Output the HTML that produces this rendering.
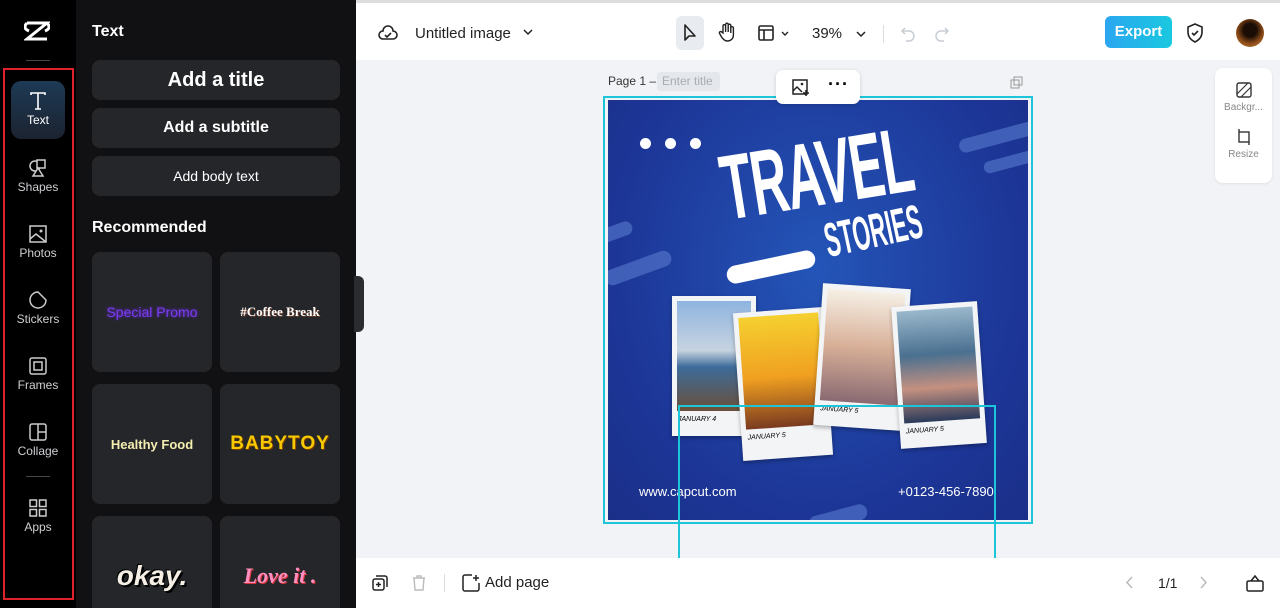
<!DOCTYPE html>
<html><head><meta charset="utf-8"><style>
*{box-sizing:border-box;margin:0;padding:0}
body{width:1280px;height:608px;overflow:hidden;font-family:"Liberation Sans",sans-serif;position:relative;background:#f1f3f6}
.abs{position:absolute}
#nav{left:0;top:0;width:76px;height:608px;background:#000}
#panel{left:76px;top:0;width:280px;height:608px;background:#111113}
.nv{position:absolute;left:11px;width:54px;height:58px;color:#cfcfd3;font-size:12px;text-align:center}
.nv svg{display:block;margin:10px auto 2px}
.btn{position:absolute;left:16px;width:248px;background:#25262a;border-radius:8px;color:#fff;text-align:center;font-weight:bold}
.tile{position:absolute;width:120px;height:120px;background:#25262a;border-radius:8px;display:flex;align-items:center;justify-content:center;font-weight:bold}
#top{left:356px;top:0;width:924px;height:60px;background:#fff;border-top:3px solid #ddd}
#bot{left:356px;top:558px;width:924px;height:50px;background:#fff}
</style></head><body>
<div id="nav" class="abs">
 <svg class="abs" style="left:24px;top:20px" width="26" height="22" viewBox="0 0 26 22"><path d="M3 3 L23 3 L3 19 L23 19 M3 3 C0 6 0 9 5 11 M23 3 C26 6 26 9 21 11" stroke="#fff" stroke-width="3" fill="none"/></svg>
 <div class="abs" style="left:26px;top:60px;width:24px;height:1px;background:#444"></div>
 <div class="abs" style="left:3px;top:68px;width:71px;height:532px;border:2px solid #e0222a"></div>
 <div class="nv" style="top:81px;background:linear-gradient(#1d3a55,#1c2330);border-radius:10px;color:#fff">
  <svg width="20" height="20" viewBox="0 0 20 20"><path d="M3 4V2h14v2M10 2v16M7 18h6" stroke="#fff" stroke-width="1.6" fill="none"/></svg>Text</div>
 <div class="nv" style="top:148px"><svg width="20" height="20" viewBox="0 0 20 20"><circle cx="7" cy="8" r="5" stroke="#ccc" stroke-width="1.5" fill="none"/><rect x="9" y="2" width="8" height="8" stroke="#ccc" stroke-width="1.5" fill="#000"/><path d="M10 10L15 18H5Z" stroke="#ccc" stroke-width="1.5" fill="#000"/></svg>Shapes</div>
 <div class="nv" style="top:214px"><svg width="20" height="20" viewBox="0 0 20 20"><rect x="2" y="2" width="16" height="16" stroke="#ccc" stroke-width="1.5" fill="none"/><path d="M2 15l6-5 10 8" stroke="#ccc" stroke-width="1.5" fill="none"/><circle cx="13" cy="7" r="1.5" fill="#ccc"/></svg>Photos</div>
 <div class="nv" style="top:280px"><svg width="20" height="20" viewBox="0 0 20 20"><path d="M10 2a8 8 0 1 0 8 8l-8-8z" stroke="#ccc" stroke-width="1.5" fill="none"/></svg>Stickers</div>
 <div class="nv" style="top:346px"><svg width="20" height="20" viewBox="0 0 20 20"><rect x="2" y="2" width="16" height="16" rx="2" stroke="#ccc" stroke-width="1.5" fill="none"/><rect x="6" y="6" width="8" height="8" stroke="#ccc" stroke-width="1.5" fill="none"/></svg>Frames</div>
 <div class="nv" style="top:412px"><svg width="20" height="20" viewBox="0 0 20 20"><rect x="2" y="2" width="16" height="16" rx="2" stroke="#ccc" stroke-width="1.5" fill="none"/><path d="M10 2v16M10 10h8" stroke="#ccc" stroke-width="1.5"/></svg>Collage</div>
 <div class="abs" style="left:26px;top:476px;width:24px;height:1px;background:#444"></div>
 <div class="nv" style="top:488px"><svg width="20" height="20" viewBox="0 0 20 20"><rect x="2" y="2" width="6.5" height="6.5" stroke="#ccc" stroke-width="1.5" fill="none"/><rect x="11.5" y="2" width="6.5" height="6.5" stroke="#ccc" stroke-width="1.5" fill="none"/><rect x="2" y="11.5" width="6.5" height="6.5" stroke="#ccc" stroke-width="1.5" fill="none"/><rect x="11.5" y="11.5" width="6.5" height="6.5" stroke="#ccc" stroke-width="1.5" fill="none"/></svg>Apps</div>
</div>
<div id="panel" class="abs">
 <div class="abs" style="left:16px;top:23px;color:#fff;font-weight:bold;font-size:16px">Text</div>
 <div class="btn" style="top:60px;height:40px;line-height:40px;font-size:20px">Add a title</div>
 <div class="btn" style="top:108px;height:40px;line-height:40px;font-size:16px">Add a subtitle</div>
 <div class="btn" style="top:156px;height:40px;line-height:40px;font-size:14px;font-weight:normal">Add body text</div>
 <div class="abs" style="left:16px;top:219px;color:#fff;font-weight:bold;font-size:16px">Recommended</div>
 <div class="tile" style="left:16px;top:252px;color:#7b3cf0;font-size:14px;font-weight:normal;text-shadow:0 0 3px #6a2be0">Special Promo</div>
 <div class="tile" style="left:144px;top:252px;color:#fff;font-family:'Liberation Serif',serif;font-size:13px;text-shadow:1px 1px 0 #6b3a25">#Coffee Break</div>
 <div class="tile" style="left:16px;top:384px;color:#f4eeb0;font-size:13px">Healthy Food</div>
 <div class="tile" style="left:144px;top:384px;color:#f6c900;font-size:19px;letter-spacing:1px;text-shadow:1px 1px 0 #7a3b00">BABYTOY</div>
 <div class="tile" style="left:16px;top:516px;height:92px;border-radius:8px 8px 0 0;padding-top:28px;color:#f5efe6;font-size:28px;font-style:italic;text-shadow:2px 2px 0 #000,-1px -1px 0 #000">okay.</div>
 <div class="tile" style="left:144px;top:516px;height:92px;border-radius:8px 8px 0 0;padding-top:28px;color:#ff8fc0;font-family:'Liberation Serif',serif;font-size:22px;font-style:italic;text-shadow:1px 1px 0 #d8343a">Love it .</div>
 <div class="abs" style="left:278px;top:276px;width:10px;height:56px;background:#2b2c30;border-radius:0 6px 6px 0"></div>
</div>
<div id="top" class="abs">
 <svg class="abs" style="left:22px;top:21px" width="20" height="18" viewBox="0 0 20 18"><path d="M5 15a4 4 0 0 1 0-8 5 5 0 0 1 10 0 4 4 0 0 1 0 8z" stroke="#222" stroke-width="1.6" fill="none"/><path d="M7 11l2 2 4-4" stroke="#222" stroke-width="1.6" fill="none"/></svg>
 <div class="abs" style="left:59px;top:22px;font-size:15px;color:#222">Untitled image</div>
 <svg class="abs" style="left:167px;top:26px" width="10" height="7" viewBox="0 0 10 7"><path d="M1 1l4 4 4-4" stroke="#222" stroke-width="1.5" fill="none"/></svg>
 <div class="abs" style="left:320px;top:13px;width:28px;height:34px;background:#e8ebef;border-radius:6px"></div>
 <svg class="abs" style="left:327px;top:21px" width="14" height="18" viewBox="0 0 14 18"><path d="M2 1v15l4-4 6 0z" stroke="#222" stroke-width="1.6" fill="none" stroke-linejoin="round"/></svg>
 <svg class="abs" style="left:362px;top:19px" width="18" height="20" viewBox="0 0 18 20"><path d="M5 11V4a1.3 1.3 0 0 1 2.6 0v6V2.5a1.3 1.3 0 0 1 2.6 0V10V3.5a1.3 1.3 0 0 1 2.6 0V11V6a1.3 1.3 0 0 1 2.6 0v7c0 4-3 6-6 6s-5-2-7-6l-1-2a1.3 1.3 0 0 1 2.3-1z" stroke="#222" stroke-width="1.4" fill="none"/></svg>
 <svg class="abs" style="left:402px;top:22px" width="16" height="16" viewBox="0 0 16 16"><rect x="1" y="1" width="14" height="14" rx="1.5" stroke="#222" stroke-width="1.6" fill="none"/><path d="M1 5h14M6 5v10" stroke="#222" stroke-width="1.6"/></svg>
 <svg class="abs" style="left:425px;top:28px" width="8" height="6" viewBox="0 0 8 6"><path d="M1 1l3 3 3-3" stroke="#222" stroke-width="1.4" fill="none"/></svg>
 <div class="abs" style="left:456px;top:22px;font-size:15px;color:#222">39%</div>
 <svg class="abs" style="left:500px;top:28px" width="10" height="7" viewBox="0 0 10 7"><path d="M1 1l4 4 4-4" stroke="#222" stroke-width="1.5" fill="none"/></svg>
 <div class="abs" style="left:527px;top:22px;width:1px;height:18px;background:#ddd"></div>
 <svg class="abs" style="left:544px;top:23px" width="16" height="16" viewBox="0 0 16 16"><path d="M5 2L2 5l3 3M2 5h7a5 5 0 0 1 0 10H6" stroke="#c8cdd3" stroke-width="1.5" fill="none"/></svg>
 <svg class="abs" style="left:578px;top:23px" width="16" height="16" viewBox="0 0 16 16"><path d="M11 2l3 3-3 3M14 5H7a5 5 0 0 0 0 10h3" stroke="#c8cdd3" stroke-width="1.5" fill="none"/></svg>
 <div class="abs" style="left:749px;top:13px;width:67px;height:32px;border-radius:6px;background:linear-gradient(90deg,#2aa6f0,#1ac8e0);color:#fff;font-weight:bold;font-size:15px;text-align:center;line-height:32px">Export</div>
 <svg class="abs" style="left:830px;top:20px" width="18" height="20" viewBox="0 0 18 20"><path d="M9 1l7 3v5c0 5-3 8-7 10-4-2-7-5-7-10V4z" stroke="#222" stroke-width="1.6" fill="none"/><path d="M6 10l2 2 4-4" stroke="#222" stroke-width="1.6" fill="none"/></svg>
 <div class="abs" style="left:880px;top:16px;width:28px;height:28px;border-radius:50%;background:radial-gradient(circle at 50% 40%,#1a0d05 30%,#8a4a18 60%,#d08a3a)"></div>
</div>
<div class="abs" style="left:608px;top:74px;font-size:12px;color:#333">Page 1 –</div>
<div class="abs" style="left:657px;top:72px;width:63px;height:19px;background:#e4e7eb;border-radius:3px;font-size:12px;color:#a8adb4;line-height:19px;padding-left:5px">Enter title</div>
<svg class="abs" style="left:1010px;top:76px" width="13" height="13" viewBox="0 0 13 13"><rect x="1" y="4" width="8" height="8" stroke="#999" fill="none"/><rect x="4" y="1" width="8" height="8" stroke="#999" fill="none"/></svg>
<div class="abs" style="left:603px;top:96px;width:430px;height:428px;border:2px solid #1cc6d8"></div>
<div class="abs" style="left:608px;top:100px;width:420px;height:420px;background:radial-gradient(ellipse at 50% 40%,#2455b8,#1c3596 70%,#1a2f88);overflow:hidden">
 <div class="abs" style="left:350px;top:30px;width:80px;height:14px;background:#4a6ac0;border-radius:8px;transform:rotate(-15deg);opacity:.8"></div>
 <div class="abs" style="left:375px;top:55px;width:60px;height:12px;background:#4a6ac0;border-radius:8px;transform:rotate(-15deg);opacity:.8"></div>
 <div class="abs" style="left:-10px;top:125px;width:35px;height:14px;background:#4a6ac0;border-radius:8px;transform:rotate(-20deg);opacity:.8"></div>
 <div class="abs" style="left:-5px;top:160px;width:70px;height:16px;background:#4a6ac0;border-radius:8px;transform:rotate(-20deg);opacity:.8"></div>
 <div class="abs" style="left:200px;top:410px;width:60px;height:16px;background:#4a6ac0;border-radius:8px;transform:rotate(-15deg);opacity:.8"></div>
 <div class="abs" style="left:32px;top:38px;width:11px;height:11px;border-radius:50%;background:#fff;box-shadow:25px 0 0 #fff,50px 0 0 #fff"></div>
 <div class="abs" style="left:106px;top:40px;color:#fff;font-size:92px;line-height:100px;font-weight:bold;transform:rotate(-9deg) scaleX(.55);transform-origin:left top;letter-spacing:-2px">TRAVEL</div>
 <div class="abs" style="left:212px;top:118px;color:#fff;font-size:48px;line-height:50px;font-weight:bold;transform:rotate(-12deg) scaleX(.47);transform-origin:left top">STORIES</div>
 <div class="abs" style="left:118px;top:158px;width:90px;height:18px;background:#fff;border-radius:10px;transform:rotate(-12deg)"></div>
 <div class="abs" style="left:64px;top:196px;width:84px;height:140px;background:#f2f4f6;box-shadow:0 2px 4px rgba(0,0,0,.3)"><div style="margin:5px;height:110px;background:linear-gradient(#8fb4e0,#c6d3e0 45%,#3d6b9a 60%,#6b5038)"></div><div style="font-size:7px;font-style:italic;padding-left:6px">JANUARY 4</div></div>
 <div class="abs" style="left:130px;top:210px;width:90px;height:148px;background:#f2f4f6;transform:rotate(-4deg);box-shadow:0 2px 4px rgba(0,0,0,.3)"><div style="margin:5px;height:112px;background:linear-gradient(#f5d030,#f0a020 55%,#7a3a20)"></div><div style="font-size:7px;font-style:italic;padding-left:6px">JANUARY 5</div></div>
 <div class="abs" style="left:210px;top:186px;width:88px;height:142px;background:#f2f4f6;transform:rotate(4deg);box-shadow:0 2px 4px rgba(0,0,0,.3)"><div style="margin:5px;height:112px;background:linear-gradient(#f6f0e6,#d8b098 50%,#8a6a72)"></div><div style="font-size:7px;font-style:italic;padding-left:6px">JANUARY 5</div></div>
 <div class="abs" style="left:288px;top:204px;width:86px;height:142px;background:#f2f4f6;transform:rotate(-4deg);box-shadow:0 2px 4px rgba(0,0,0,.3)"><div style="margin:5px;height:112px;background:linear-gradient(#9ab8cc,#4a7090 40%,#c49080 70%,#2a3a5a)"></div><div style="font-size:7px;font-style:italic;padding-left:6px">JANUARY 5</div></div>
 <div class="abs" style="left:31px;top:384px;color:#fff;font-size:13px">www.capcut.com</div>
 <div class="abs" style="left:290px;top:384px;color:#fff;font-size:13px">+0123-456-7890</div>
</div>
<div class="abs" style="left:678px;top:405px;width:318px;height:160px;border:2px solid #1cc6d8;border-bottom:none"></div>
<div class="abs" style="left:776px;top:70px;width:84px;height:34px;background:#fff;border-radius:7px;box-shadow:0 1px 4px rgba(0,0,0,.15)">
 <svg class="abs" style="left:16px;top:9px" width="18" height="18" viewBox="0 0 18 18"><rect x="1" y="1" width="14" height="14" stroke="#222" stroke-width="1.5" fill="none"/><path d="M1 12l4-4 5 5" stroke="#222" stroke-width="1.5" fill="none"/><circle cx="10" cy="5" r="1.3" fill="#222"/><path d="M14 11v6M11 14h6" stroke="#222" stroke-width="1.6"/></svg>
 <div class="abs" style="left:52px;top:4px;font-size:18px;font-weight:bold;letter-spacing:1px">···</div>
</div>
<div class="abs" style="left:1215px;top:68px;width:57px;height:115px;background:#fff;border-radius:8px;box-shadow:0 1px 3px rgba(0,0,0,.08);font-size:10px;color:#888;text-align:center">
 <svg style="display:block;margin:14px auto 4px" width="16" height="16" viewBox="0 0 16 16"><rect x="1" y="1" width="14" height="14" rx="2" stroke="#333" stroke-width="1.4" fill="none"/><path d="M1 12L12 1M5 15L15 5" stroke="#333" stroke-width="1.2"/></svg>Backgr...
 <svg style="display:block;margin:16px auto 4px" width="16" height="16" viewBox="0 0 16 16"><rect x="3" y="3" width="10" height="10" stroke="#333" stroke-width="1.4" fill="none"/><path d="M3 0v3M13 13v3" stroke="#333" stroke-width="1.4"/></svg>Resize
</div>
<div id="bot" class="abs">
 <svg class="abs" style="left:16px;top:17px" width="16" height="16" viewBox="0 0 16 16"><rect x="1" y="4" width="11" height="11" rx="2" stroke="#222" stroke-width="1.5" fill="none"/><path d="M4 1h9a2 2 0 0 1 2 2v9M6.5 7v5M4 9.5h5" stroke="#222" stroke-width="1.5" fill="none"/></svg>
 <svg class="abs" style="left:56px;top:17px" width="14" height="16" viewBox="0 0 14 16"><path d="M1 3h12M5 3V1h4v2M2 3l1 12h8l1-12" stroke="#bbb" stroke-width="1.4" fill="none"/></svg>
 <div class="abs" style="left:88px;top:16px;width:1px;height:18px;background:#ddd"></div>
 <svg class="abs" style="left:106px;top:16px" width="18" height="18" viewBox="0 0 18 18"><path d="M10 1H3a2 2 0 0 0-2 2v12a2 2 0 0 0 2 2h12a2 2 0 0 0 2-2V9M14 1v6M11 4h6" stroke="#222" stroke-width="1.5" fill="none"/></svg>
 <div class="abs" style="left:129px;top:16px;font-size:15px;color:#222">Add page</div>
 <svg class="abs" style="left:769px;top:18px" width="8" height="13" viewBox="0 0 8 13"><path d="M7 1L2 6.5 7 12" stroke="#bbb" stroke-width="1.5" fill="none"/></svg>
 <div class="abs" style="left:802px;top:17px;font-size:14px;color:#222">1/1</div>
 <svg class="abs" style="left:844px;top:18px" width="8" height="13" viewBox="0 0 8 13"><path d="M1 1l5 5.5L1 12" stroke="#bbb" stroke-width="1.5" fill="none"/></svg>
 <svg class="abs" style="left:890px;top:16px" width="18" height="18" viewBox="0 0 18 18"><rect x="1" y="7" width="16" height="10" rx="1.5" stroke="#222" stroke-width="1.5" fill="none"/><path d="M5 7l4-5 4 5" stroke="#222" stroke-width="1.5" fill="none"/></svg>
</div>
</body></html>
